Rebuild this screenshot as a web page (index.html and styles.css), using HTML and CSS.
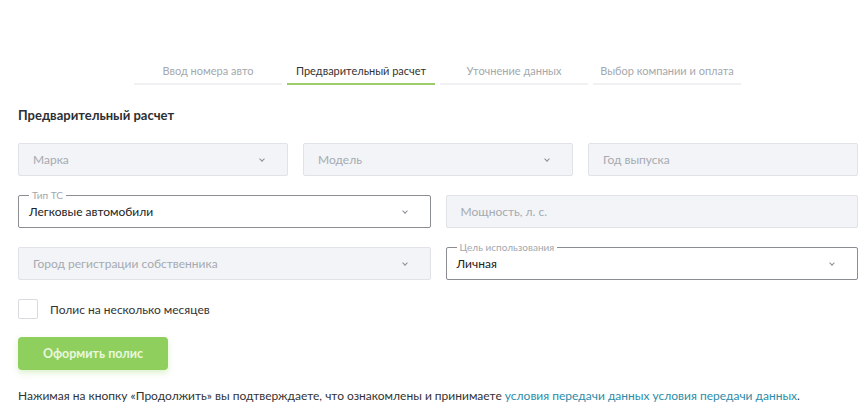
FILE: index.html
```html
<!DOCTYPE html>
<html lang="ru">
<head>
    <meta charset="UTF-8">
    <title>Предварительный расчет</title>
    <link rel="stylesheet" href="styles.css">
</head>
<body>
    <div class="container">
        <div class="steps">
            <div class="step">Ввод номера авто</div>
            <div class="step active">Предварительный расчет</div>
            <div class="step">Уточнение данных</div>
            <div class="step">Выбор компании и оплата</div>
        </div>

        <h2>Предварительный расчет</h2>

        <div class="row three">
            <div class="field disabled select">Марка</div>
            <div class="field disabled select">Модель</div>
            <div class="field disabled">Год выпуска</div>
        </div>
        <div class="row two">
            <div class="field active select"><span class="legend">Тип ТС</span>Легковые автомобили</div>
            <div class="field disabled">Мощность, л. с.</div>
        </div>
        <div class="row two">
            <div class="field disabled select">Город регистрации собственника</div>
            <div class="field active select"><span class="legend">Цель использования</span>Личная</div>
        </div>

        <label class="check"><span class="box"></span>Полис на несколько месяцев</label>

        <button class="submit">Оформить полис</button>

        <p class="note">Нажимая на кнопку «Продолжить» вы подтверждаете, что ознакомлены и принимаете <a href="#">условия передачи данных условия передачи данных</a>.</p>
    </div>
</body>
</html>
```

FILE: styles.css
```css
body {
    margin: 0;
    font-family: Lato, "Open Sans", sans-serif;
    color: #333;
    background: #fff;
}
.container {
    width: 840px;
    padding: 64px 18px 0;
}
.steps {
    display: flex;
    gap: 5px;
    margin-left: 116px;
}
.step {
    width: 148px;
    padding-bottom: 6px;
    border-bottom: 2px solid #f0f1f3;
    font-size: 11px;
    text-align: center;
    color: #a4a8ad;
}
.step.active {
    color: #333;
    border-bottom-color: #9ccc6a;
}
h2 {
    margin: 22px 0 20px;
    font-size: 13px;
    font-weight: bold;
    color: #2b2f33;
}
.row {
    display: grid;
    gap: 15px;
    margin-bottom: 19px;
}
.row.three {
    grid-template-columns: repeat(3, 1fr);
}
.row.two {
    grid-template-columns: repeat(2, 1fr);
}
.field {
    position: relative;
    height: 33px;
    box-sizing: border-box;
    padding: 0 14px;
    display: flex;
    align-items: center;
    font-size: 12px;
    border: 1px solid #dfe2e6;
    border-radius: 2px;
}
.field.disabled {
    background: #f2f4f7;
    color: #a6aab0;
}
.field.active {
    border-color: #8a8d92;
    color: #222;
    padding-left: 10px;
}
.field.select::after {
    content: "";
    position: absolute;
    right: 23px;
    top: 13px;
    width: 3px;
    height: 3px;
    border-right: 1.5px solid #8a8f96;
    border-bottom: 1.5px solid #8a8f96;
    transform: rotate(45deg);
}
.legend {
    position: absolute;
    left: 10px;
    top: -7px;
    padding: 0 3px;
    background: #fff;
    font-size: 10px;
    line-height: 12px;
    color: #a4a8ad;
}
.check {
    display: flex;
    align-items: center;
    gap: 12px;
    font-size: 12px;
    color: #333;
    margin-top: 4px;
}
.box {
    width: 18px;
    height: 18px;
    border: 1px solid #d8dbe0;
    border-radius: 2px;
}
.submit {
    display: block;
    width: 150px;
    height: 33px;
    margin-top: 18px;
    background: #8fcf5d;
    color: #eaf7dd;
    border: none;
    border-radius: 4px;
    font-family: inherit;
    font-size: 12.5px;
    font-weight: bold;
    box-shadow: 0 3px 6px rgba(143, 207, 93, 0.3);
}
.note {
    margin: 18px 0 0;
    font-size: 12px;
    color: #333;
}
.note a {
    color: #2d8ca8;
    text-decoration: none;
}
```
